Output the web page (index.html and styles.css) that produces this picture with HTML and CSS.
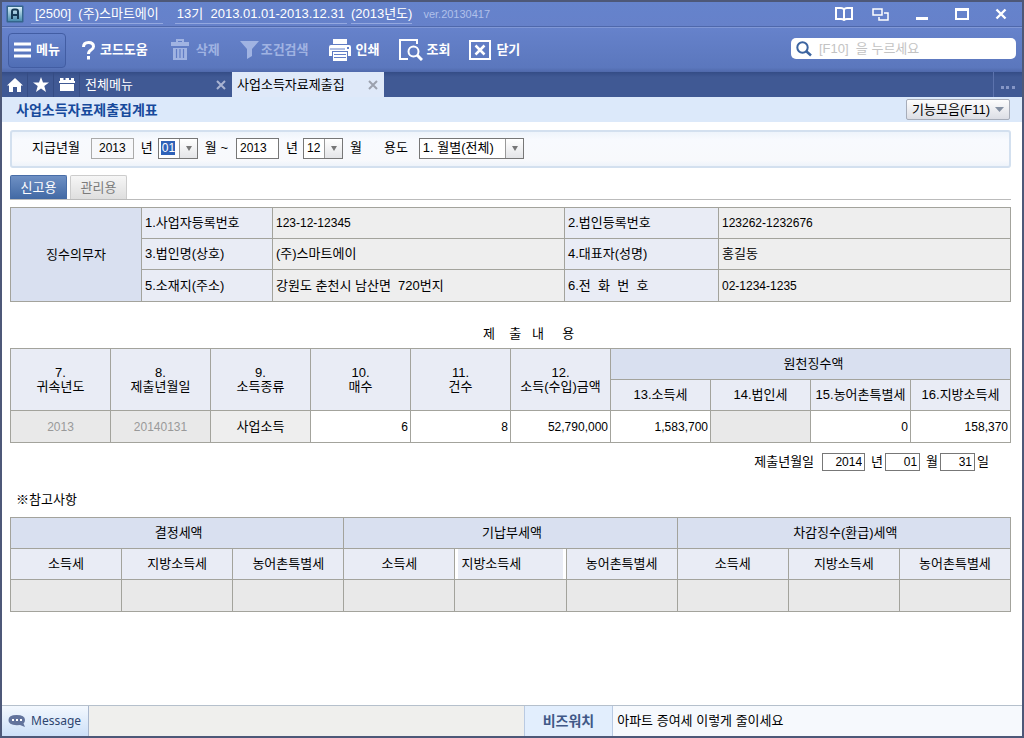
FILE: index.html
```html
<!DOCTYPE html>
<html lang="ko">
<head>
<meta charset="utf-8">
<title>사업소득자료제출집계표</title>
<link rel="stylesheet" href="styles.css">
</head>
<body>
<div class="app">
  <header class="titlebar">
    <svg class="logo" width="18" height="18" viewBox="0 0 18 18"><defs><linearGradient id="lg" x1="0" y1="0" x2="0" y2="1"><stop offset="0" stop-color="#d8f0fa"/><stop offset="1" stop-color="#4a8cae"/></linearGradient></defs><rect x=".5" y=".5" width="17" height="17" rx="1" fill="#34658c"/><rect x="2" y="2" width="14" height="14" fill="url(#lg)"/><path d="M6 14V6.500Q6 4.500 8 4.500H10Q12 4.500 12 6.500V14M6 10H12" fill="none" stroke="#173a55" stroke-width="2"/></svg>
    <span class="company">[2500]  (주)스마트에이</span>
    <span class="period">13기  2013.01.01-2013.12.31</span>
    <span class="year">(2013년도)</span>
    <span class="version">ver.20130417</span>
    <div class="window-controls">
      <button aria-label="도움말"><svg width="18" height="14" viewBox="0 0 18 14"><path d="M9 2.500Q8 1 6 1H1V12H6Q8 12 9 13Q10 12 12 12H17V1H12Q10 1 9 2.500V13" fill="none" stroke="#fff" stroke-width="2"/></svg></button>
      <button aria-label="창 전환"><svg width="17" height="13" viewBox="0 0 17 13"><path d="M1 1H10V7H1ZM12 5H16V12H7V9" fill="none" stroke="#fff" stroke-width="1.500"/></svg></button>
      <button aria-label="최소화"><svg width="14" height="13" viewBox="0 0 14 13"><path d="M1 10.500H13" stroke="#fff" stroke-width="3"/></svg></button>
      <button aria-label="최대화"><svg width="14" height="13" viewBox="0 0 14 13"><path d="M1 1H13V11H1ZM1 2H13" fill="none" stroke="#fff" stroke-width="2"/></svg></button>
      <button aria-label="창 닫기"><svg width="12" height="12" viewBox="0 0 12 12"><path d="M1.500 1.500L10.500 10.500M10.500 1.500L1.500 10.500" stroke="#fff" stroke-width="2.400"/></svg></button>
    </div>
  </header>

  <div class="toolbar">
    <button class="tool tool-menu"><svg width="17" height="16" viewBox="0 0 17 16"><path d="M0 2H17M0 8H17M0 14H17" stroke="#fff" stroke-width="3"/></svg>메뉴</button>
    <button class="tool tool-help"><svg width="13" height="19" viewBox="0 0 13 19"><path d="M1.500 6Q1.500 1.500 6.500 1.500T11.500 5.500Q11.500 7.500 9 9Q6.500 10.500 6.500 13" fill="none" stroke="#fff" stroke-width="3"/><rect x="5" y="15" width="3" height="3.500" fill="#fff"/></svg>코드도움</button>
    <button class="tool tool-delete" disabled><svg width="18" height="22" viewBox="0 0 18 22"><path d="M6 3V1H12V3" fill="none" stroke="#a0b3e2" stroke-width="2"/><path d="M0 3H18V7H0ZM2 9H16V21H2Z" fill="#a0b3e2"/><path d="M5.500 10V19M9 10V19M12.500 10V19" stroke="#617cc5" stroke-width="1.200"/></svg>삭제</button>
    <button class="tool tool-filter" disabled><svg width="19" height="18" viewBox="0 0 19 18"><path d="M0 0H19L12 8V15L7 18V8Z" fill="#a0b3e2"/></svg>조건검색</button>
    <button class="tool tool-print"><svg width="22" height="22" viewBox="0 0 22 22"><rect x="4" y="0" width="14" height="5" fill="#fff"/><path d="M0 8Q0 6 2 6H20Q22 6 22 8V17H19V12H3V17H0Z" fill="#fff"/><path d="M4 13H18V22H4Z" fill="#fff"/><path d="M5 15.500H17M5 18.500H17M1 10H16" stroke="#6580c8" stroke-width="1.200"/><rect x="18" y="8" width="2" height="2" fill="#6580c8"/></svg>인쇄</button>
    <button class="tool tool-view"><svg width="24" height="22" viewBox="0 0 24 22"><path d="M18 5V1H1V20H9" fill="none" stroke="#fff" stroke-width="2"/><circle cx="14.500" cy="12.500" r="5" fill="none" stroke="#fff" stroke-width="2"/><path d="M18 16L23 21" stroke="#fff" stroke-width="3"/></svg>조회</button>
    <button class="tool tool-close"><svg width="22" height="20" viewBox="0 0 22 20"><rect x="1" y="1" width="20" height="18" fill="none" stroke="#fff" stroke-width="2"/><path d="M6.500 5.500L15.500 14.500M15.500 5.500L6.500 14.500" stroke="#fff" stroke-width="2.500"/></svg>닫기</button>
    <label class="search"><svg width="16" height="16" viewBox="0 0 16 16"><circle cx="6.500" cy="6.500" r="5.200" fill="none" stroke="#3c64a0" stroke-width="2"/><path d="M10 10L15 14.500" stroke="#3c64a0" stroke-width="2.500"/></svg><input type="text" placeholder="[F10]  을 누르세요" aria-label="검색"></label>
  </div>

  <nav class="tabbar">
    <button class="tab-icon" aria-label="홈"><svg width="16" height="14" viewBox="0 0 16 14"><path d="M8 0L16 7.500H14V14H10V9H6V14H2V7.500H0Z" fill="#fff"/></svg></button>
    <button class="tab-icon" aria-label="즐겨찾기"><svg width="16" height="15" viewBox="0 0 16 15"><path d="M8 0L10 5.500H16L11.300 9L13 15L8 11.500L3 15L4.700 9L0 5.500H6Z" fill="#fff"/></svg></button>
    <button class="tab-icon" aria-label="목록"><svg width="16" height="13" viewBox="0 0 16 13"><path d="M1 0H4.500V2H6.500V0H10V2H12V0H15V3H16V5H0V3H1ZM1 6H15V13H1Z" fill="#fff"/></svg></button>
    <div class="tab"><a href="#">전체메뉴</a><button aria-label="탭 닫기"><svg width="10" height="10" viewBox="0 0 10 10"><path d="M1 1L9 9M9 1L1 9" stroke="#a9b4d2" stroke-width="2"/></svg></button></div>
    <div class="tab tab-on"><a href="#">사업소득자료제출집</a><button aria-label="탭 닫기"><svg width="10" height="10" viewBox="0 0 10 10"><path d="M1 1L9 9M9 1L1 9" stroke="#9ba1ae" stroke-width="2"/></svg></button></div>
    <button class="more" aria-label="더보기"><svg width="14" height="4" viewBox="0 0 14 4"><path d="M0 0H3V3H0ZM5 0H8V3H5ZM11 0H14V3H11Z" fill="#8596c6"/></svg></button>
  </nav>

  <div class="page-head">
    <h1>사업소득자료제출집계표</h1>
    <button class="functions">기능모음(F11)<svg width="9" height="6" viewBox="0 0 9 6"><path d="M0 0H9L4.500 5Z" fill="#8490a2"/></svg></button>
  </div>

  <main>
    <form class="filter">
      <label for="from-year" class="lead">지급년월</label>
      <input id="from-year" class="year-locked" value="2013" readonly>
      <label for="from-year" class="unit">년</label>
      <span class="combo combo-month combo-focus"><select id="from-month"><option>01</option></select></span>
      <label for="from-month" class="unit-range">월 ~</label>
      <input id="to-year" value="2013">
      <label for="to-year" class="unit">년</label>
      <span class="combo combo-month"><select id="to-month"><option>12</option></select></span>
      <label for="to-month" class="unit-last">월</label>
      <label for="usage" class="usage">용도</label>
      <span class="combo combo-usage"><select id="usage"><option>1. 월별(전체)</option></select></span>
    </form>

    <div class="subtabs">
      <button class="subtab subtab-on">신고용</button>
      <button class="subtab">관리용</button>
    </div>

    <table class="grid payer">
      <colgroup><col class="c-head"><col class="c-head"><col class="c-value"><col class="c-name"><col class="c-value"></colgroup>
      <tr><th rowspan="3" class="group">징수의무자</th><th>1.사업자등록번호</th><td class="num">123-12-12345</td><th>2.법인등록번호</th><td class="num">123262-1232676</td></tr>
      <tr><th>3.법인명(상호)</th><td>(주)스마트에이</td><th>4.대표자(성명)</th><td>홍길동</td></tr>
      <tr><th>5.소재지(주소)</th><td>강원도 춘천시 남산면  720번지</td><th>6.전  화  번  호</th><td class="num">02-1234-1235</td></tr>
    </table>

    <h2 class="caption">제    출   내     용</h2>
    <table class="grid submit">
      <thead>
        <tr><th rowspan="2">7.<br>귀속년도</th><th rowspan="2">8.<br>제출년월일</th><th rowspan="2">9.<br>소득종류</th><th rowspan="2">10.<br>매수</th><th rowspan="2">11.<br>건수</th><th rowspan="2">12.<br>소득(수입)금액</th><th colspan="4" class="group">원천징수액</th></tr>
        <tr><th>13.소득세</th><th>14.법인세</th><th>15.농어촌특별세</th><th>16.지방소득세</th></tr>
      </thead>
      <tbody>
        <tr><td class="locked">2013</td><td class="locked">20140131</td><td class="kind">사업소득</td><td>6</td><td>8</td><td>52,790,000</td><td>1,583,700</td><td class="locked"></td><td>0</td><td>158,370</td></tr>
      </tbody>
    </table>

    <form class="submit-date">
      <label for="sub-year" class="date-lead">제출년월일</label>
      <input id="sub-year" class="date-year" value="2014">
      <label for="sub-year" class="date-unit">년</label>
      <input id="sub-month" value="01">
      <label for="sub-month" class="date-unit">월</label>
      <input id="sub-day" value="31">
      <label for="sub-day">일</label>
    </form>

    <h2 class="note">※참고사항</h2>
    <table class="grid reference">
      <thead>
        <tr><th colspan="3" class="group">결정세액</th><th colspan="3" class="group">기납부세액</th><th colspan="3" class="group">차감징수(환급)세액</th></tr>
        <tr><th>소득세</th><th>지방소득세</th><th>농어촌특별세</th><th>소득세</th><th class="editing">지방소득세</th><th>농어촌특별세</th><th>소득세</th><th>지방소득세</th><th>농어촌특별세</th></tr>
      </thead>
      <tbody><tr><td></td><td></td><td></td><td></td><td></td><td></td><td></td><td></td><td></td></tr></tbody>
    </table>
  </main>

  <footer class="statusbar">
    <button class="message"><svg width="18" height="14" viewBox="0 0 18 14"><path d="M8.500 1Q17 1 17 6Q17 8 15.500 9.500L17 13L12 11Q0 12 .5 6Q.5 1 8.500 1Z" fill="#62739c"/><path d="M4 5H6V7H4ZM8 5H10V7H8ZM12 5H14V7H12Z" fill="#fff"/></svg>Message</button>
    <div class="status-text"></div>
    <strong class="watch">비즈워치</strong>
    <a class="news" href="#">아파트 증여세 이렇게 줄이세요</a>
  </footer>
</div>
</body>
</html>
```

FILE: styles.css
```css
* { box-sizing: border-box; }
body { margin: 0; }
body, button, input, select {
  font-family: "Liberation Sans", "Noto Sans CJK KR", sans-serif;
  font-size: 13px;
  line-height: 16px;
  color: #000;
}
button { margin: 0; padding: 0; border: 0; background: none; white-space: pre; }
a { color: inherit; text-decoration: none; }
h1, h2 { margin: 0; font-size: 13px; line-height: 16px; }
svg { flex: none; }

.app {
  display: flex;
  flex-direction: column;
  min-height: 100vh;
  border: 2px solid #4d5878;
  background: #fff;
}

/* Title bar */
.titlebar {
  display: flex;
  align-items: center;
  height: 25px;
  padding: 0 15px 0 4px;
  border-bottom: 1px solid #4f68ab;
  background: linear-gradient(#6583cc, #6681ca);
  color: #fff;
  white-space: pre;
}
.company, .period, .year { border-bottom: 1px solid #94a8df; line-height: 19px; }
.company { margin-left: 7px; padding: 0 4px; }
.period { margin-left: 12px; padding: 0 2px; }
.year { margin-left: 4px; }
.version { margin-left: 11px; font-size: 11px; color: #b0c0ea; }
.window-controls { display: flex; align-items: center; gap: 19px; margin-left: auto; }
.window-controls button { display: flex; }
.window-controls button:nth-child(n+3) { margin-left: 7px; }

/* Toolbar */
.toolbar {
  display: flex;
  align-items: center;
  height: 45px;
  padding: 0 6px;
  border-top: 1px solid #8198d6;
  background: linear-gradient(#6682cb, #5b77bd 90%, #5069ab);
}
.tool { display: flex; align-items: center; gap: 5px; color: #fff; font-weight: bold; }
.tool:disabled { color: #a0b3e2; }
.tool-menu {
  height: 35px;
  padding: 0 5px;
  border: 1px solid #425da3;
  border-radius: 4px;
  background: linear-gradient(#6683cc, #506eb5);
}
.tool-help { margin-left: 16px; }
.tool-delete { margin-left: 23px; gap: 7px; }
.tool-filter { margin-left: 20px; gap: 2px; }
.tool-print { margin-left: 20px; }
.tool-view { margin-left: 20px; gap: 3px; }
.tool-close { margin-left: 19px; }
.search {
  display: flex;
  align-items: center;
  flex: 0 1 225px;
  height: 21px;
  margin-left: auto;
  padding: 0 5px;
  gap: 7px;
  border-radius: 5px;
  background: #fff;
}
.toolbar .search { margin-bottom: 3px; }
.search input { flex: 1; min-width: 0; padding: 0; border: 0; outline: 0; background: none; }
.search input::placeholder { color: #c3c3c3; opacity: 1; }

/* Open programs */
.tabbar { display: flex; height: 25px; background: linear-gradient(#344c86, #405994 5px); }
.tab-icon {
  display: flex;
  align-items: center;
  justify-content: center;
  width: 26px;
  border-right: 1px solid #354c84;
}
.tab {
  display: flex;
  align-items: center;
  justify-content: space-between;
  width: 152px;
  padding: 0 6px 0 5px;
  color: #fff;
}
.tab button { display: flex; }
.tab-on { background: #dfe9f9; color: #000; }
.more {
  display: flex;
  align-items: center;
  justify-content: center;
  width: 29px;
  margin-left: auto;
  padding-top: 6px;
  border-left: 1px solid #5c73ad;
}

.page-head {
  display: flex;
  align-items: center;
  justify-content: space-between;
  height: 25px;
  padding: 0 12px 0 14px;
  background: #dce9fa;
}
.page-head h1 { font-size: 14px; color: #174a9c; }
.functions {
  display: flex;
  align-items: center;
  gap: 5px;
  height: 21px;
  padding: 0 5px;
  border: 1px solid #a7adb9;
  border-radius: 2px;
  background: linear-gradient(#fdfdfd, #dcdee5);
}

main { flex: 1; padding: 8px 11px 24px 8px; }

/* Search conditions */
.filter {
  display: flex;
  align-items: center;
  height: 38px;
  padding: 0 20px 2px;
  border: 2px solid #d3e0ef;
  border-radius: 3px;
  background: linear-gradient(#eef4fb, #f8fafe 8px, #f8f9fc 28px, #eef3fa);
}
.filter input {
  width: 43px;
  height: 21px;
  padding: 0 3px;
  border: 1px solid #777;
  background: #fff;
  font-size: 12px;
}
.filter .year-locked { border-color: #aaa; background: #f7f8fb; text-align: center; }
.lead { margin-right: 11px; }
.unit { margin: 0 5px 0 7px; }
.unit-range { margin: 0 8px 0 7px; }
.unit-last { margin-left: 7px; }
.usage { margin: 0 11px 0 22px; }
.combo { display: flex; position: relative; height: 21px; border: 1px solid #777; background: #fff; }
.combo select {
  width: 100%;
  padding: 0 3px;
  border: 0;
  background: none;
  appearance: none;
  outline: 0;
}
.combo::after {
  content: "";
  position: absolute;
  inset: 0 0 0 auto;
  width: 17px;
  border-left: 1px solid #999;
  background: linear-gradient(#fff, #e4e5e8);
  pointer-events: none;
}
.combo::before {
  content: "";
  position: absolute;
  z-index: 1;
  top: 7px;
  right: 5px;
  border: 3px solid transparent;
  border-top: 5px solid #777;
  border-bottom: 0;
  pointer-events: none;
}
.combo-month { width: 40px; }
.combo-month select { font-size: 12px; }
.combo-usage { width: 105px; }
.combo-focus select {
  color: #fff;
  background: linear-gradient(#2f62b8, #2f62b8) 2px 2px / 14px 14px no-repeat;
}

/* Form tabs */
.subtabs {
  display: flex;
  gap: 3px;
  height: 25px;
  margin: 7px 0;
  border-bottom: 1px solid #bbb;
}
.subtab {
  width: 57px;
  border: 1px solid #ccc;
  border-bottom: 0;
  border-radius: 2px 2px 0 0;
  background: linear-gradient(#f6f6f6, #dedede);
  color: #7c7c7c;
}
.subtab-on { border-color: #486da7; background: linear-gradient(#6e90c4, #4269a4); color: #fff; }

/* Form tables */
.grid { width: 100%; border-collapse: collapse; table-layout: fixed; }
.grid th, .grid td {
  height: 31px;
  padding: 0 3px;
  border: 1px solid #a3a39c;
  font-weight: normal;
  line-height: 14px;
}
.grid th { background: #e9ecf5; }
.grid .group { background: #d9e0f0; text-align: center; }
.grid tr:last-child td { height: 32px; }
.payer th { text-align: left; }
.payer td { background: #eee; }
.payer th, .payer td { white-space: pre; overflow: hidden; }
.payer .num { font-size: 12px; }
.c-head { width: 13.1%; }
.c-value { width: 29.2%; }
.c-name { width: 15.4%; }

.caption { margin: 24px 0 6px 36px; font-weight: normal; text-align: center; white-space: pre; }
.submit th { padding: 0; }
.submit td { text-align: right; font-size: 12px; padding: 0 2px; }
.grid .locked { background: #e9e9e9; color: #999; text-align: center; }
.grid .kind { background: #eee; text-align: center; font-size: 13px; }
.submit .group, .reference .group { padding-left: 6px; }

.submit-date {
  display: flex;
  align-items: center;
  justify-content: flex-end;
  margin: 10px 22px 0 0;
}
.submit-date input {
  width: 35px;
  height: 18px;
  padding: 0 2px;
  border: 1px solid #777;
  font-size: 12px;
  text-align: right;
}
.submit-date .date-year { width: 43px; }
.date-lead { margin-right: 8px; }
.date-unit { margin: 0 2px 0 6px; }
.submit-date input:last-of-type { margin-right: 2px; }

.note { margin: 21px 0 9px 6px; font-weight: normal; }
.reference td { background: #e9e9e9; }
.reference .editing { text-align: left; padding: 0 6px; box-shadow: inset 3px 0 #fff, inset -3px 0 #fff; }

/* Status bar */
.statusbar { display: flex; height: 31px; border-top: 1px solid #b5c0cc; background: #f6f9fd; }
.message {
  display: flex;
  align-items: center;
  gap: 5px;
  width: 87px;
  padding-left: 6px;
  border-right: 1px solid #a9b7cd;
  background: linear-gradient(#f3f8fe, #cde0f8);
  color: #2e456f;
  font-family: "Noto Sans", sans-serif;
  font-size: 12px;
}
.status-text { flex: 437; background: #efefed; }
.watch {
  display: flex;
  align-items: center;
  justify-content: center;
  flex: 88;
  border: 1px solid #b9cae2;
  border-width: 0 1px;
  background: #e2eefd;
  color: #405887;
  font-size: 14px;
}
.news { display: flex; align-items: center; flex: 407; padding-left: 4px; white-space: pre; }
```
